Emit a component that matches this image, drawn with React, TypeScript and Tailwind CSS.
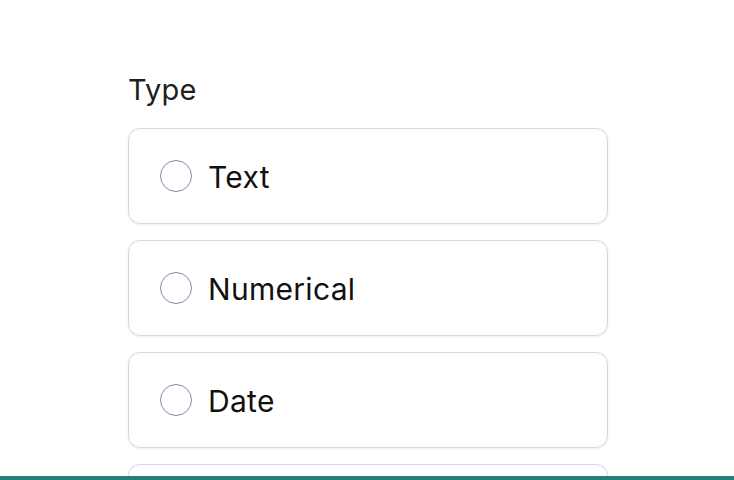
import React from "react";

const options = ["Text", "Numerical", "Date", "Other"];

export default function App() {
  return (
    <div
      className="relative h-[480px] w-[734px] overflow-hidden bg-white"
      style={{ fontFamily: "Inter, 'Noto Sans', sans-serif" }}
    >
      <div className="ml-[128px] w-[480px] pt-[72px]">
        <div className="mb-[20px] text-[29px] leading-[36px] tracking-[0.2px] text-[#1f1f1f]">Type</div>
        <div className="flex flex-col gap-4">
          {options.map((o) => (
            <div
              key={o}
              className="flex h-[96px] items-center gap-4 rounded-xl border border-[#d8d6e2] bg-white pl-[31px] shadow-[0_1px_3px_rgba(30,30,60,0.08)]"
            >
              <span className="h-8 w-8 shrink-0 rounded-full border border-[#8a86a6] bg-white" />
              <span className="pt-[2px] text-[30px] leading-none tracking-[0.3px] text-[#111]">{o}</span>
            </div>
          ))}
        </div>
      </div>
      <div className="absolute bottom-0 left-0 h-1 w-full bg-[#267f78]" />
    </div>
  );
}
